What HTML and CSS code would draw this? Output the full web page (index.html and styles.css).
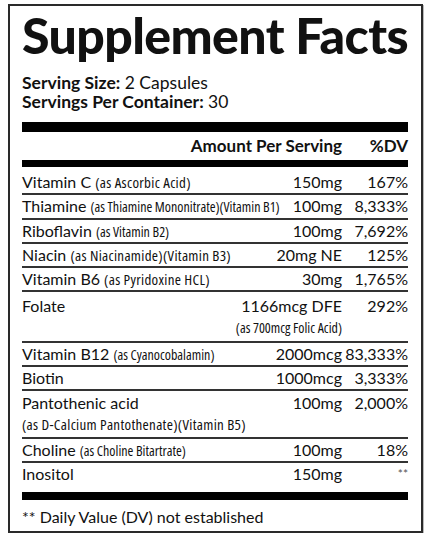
FILE: index.html
```html
<!DOCTYPE html>
<html lang="en">
<head>
    <meta charset="UTF-8">
    <meta name="viewport" content="width=device-width, initial-scale=1.0">
    <title>Supplement Facts</title>
    <link rel="stylesheet" href="styles.css">
</head>
<body>
    <div class="label">
        <h1 class="title">Supplement Facts</h1>
        <div class="serving"><b>Serving Size:</b> 2 Capsules</div>
        <div class="serving"><b>Servings Per Container:</b> 30</div>
        <div class="bar thick"></div>
        <div class="head">
            <span class="amt">Amount Per Serving</span>
            <span class="dv">%DV</span>
        </div>
        <div class="bar mid"></div>
        <div class="facts">
            <div class="row first">
                <span class="name">Vitamin C <small>(as Ascorbic Acid)</small></span>
                <span class="amt">150mg</span>
                <span class="dv">167%</span>
            </div>
            <div class="row">
                <span class="name">Thiamine <small class="tight">(as Thiamine Mononitrate)(Vitamin B1)</small></span>
                <span class="amt">100mg</span>
                <span class="dv">8,333%</span>
            </div>
            <div class="row">
                <span class="name">Riboflavin <small class="tight">(as Vitamin B2)</small></span>
                <span class="amt">100mg</span>
                <span class="dv">7,692%</span>
            </div>
            <div class="row">
                <span class="name">Niacin <small>(as Niacinamide)(Vitamin B3)</small></span>
                <span class="amt">20mg NE</span>
                <span class="dv">125%</span>
            </div>
            <div class="row">
                <span class="name">Vitamin B6 <small>(as Pyridoxine HCL)</small></span>
                <span class="amt">30mg</span>
                <span class="dv">1,765%</span>
            </div>
            <div class="row tall">
                <span class="name">Folate</span>
                <span class="amt">1166mcg DFE<small class="sub tight">(as 700mcg Folic Acid)</small></span>
                <span class="dv">292%</span>
            </div>
            <div class="row">
                <span class="name">Vitamin B12 <small class="tight">(as Cyanocobalamin)</small></span>
                <span class="amt">2000mcg</span>
                <span class="dv">83,333%</span>
            </div>
            <div class="row">
                <span class="name">Biotin</span>
                <span class="amt">1000mcg</span>
                <span class="dv">3,333%</span>
            </div>
            <div class="row tall split">
                <span class="name">Pantothenic acid<small class="sub">(as D-Calcium Pantothenate)(Vitamin B5)</small></span>
                <span class="amt">100mg</span>
                <span class="dv">2,000%</span>
            </div>
            <div class="row">
                <span class="name">Choline <small class="tight">(as Choline Bitartrate)</small></span>
                <span class="amt">100mg</span>
                <span class="dv">18%</span>
            </div>
            <div class="row last">
                <span class="name">Inositol</span>
                <span class="amt">150mg</span>
                <span class="dv stars">**</span>
            </div>
        </div>
        <div class="bar low"></div>
        <p class="note">** Daily Value (DV) not established</p>
    </div>
</body>
</html>
```

FILE: styles.css
```css
body {
    margin: 4px 0 0 8px;
    background: #fff;
    color: #111;
    font-family: "Lato", "Open Sans", sans-serif;
}
.label {
    box-sizing: border-box;
    width: 415px;
    height: 529px;
    padding: 0 13px 0 12px;
    border: 2px solid #2a2a2a;
    box-shadow: 1px 1px 0 #bbb;
}
.title {
    margin: 0;
    padding-top: 2px;
    font-size: 50px;
    font-weight: 900;
    line-height: 54px;
    letter-spacing: -0.6px;
    white-space: nowrap;
}
.serving {
    font-size: 17.5px;
    line-height: 19px;
}
.serving:first-of-type {
    margin-top: 11px;
}
.bar {
    background: #000;
}
.thick {
    height: 10px;
    margin-top: 11px;
}
.mid {
    height: 7px;
}
.low {
    height: 8px;
}
.head {
    display: grid;
    grid-template-columns: 1fr 66px;
    font-size: 17px;
    font-weight: 700;
    line-height: 28px;
    text-align: right;
}
.row {
    display: grid;
    grid-template-columns: 1fr auto 66px;
    border-top: 2px solid #333;
    font-size: 16px;
    line-height: 22.3px;
    white-space: nowrap;
}
.row.first {
    border-top: none;
    padding-top: 4px;
}
.row.last {
    padding-bottom: 7px;
}
.row small {
    font-family: "Open Sans", "DejaVu Sans Condensed", sans-serif;
    font-stretch: 75%;
    font-size: 15px;
    line-height: 16px;
    letter-spacing: 0.3px;
}
.row small.tight {
    font-size: 14px;
    letter-spacing: 0;
}
.row small.sub {
    display: block;
    line-height: 19px;
}
.row.tall {
    padding-top: 3px;
    padding-bottom: 4px;
}
.row.split {
    padding-top: 1px;
    padding-bottom: 3px;
}
.amt {
    text-align: right;
}
.dv {
    text-align: right;
}
.stars {
    font-size: 12px;
    color: #555;
}
.note {
    margin: 7px 0 0;
    font-size: 16px;
}
```
